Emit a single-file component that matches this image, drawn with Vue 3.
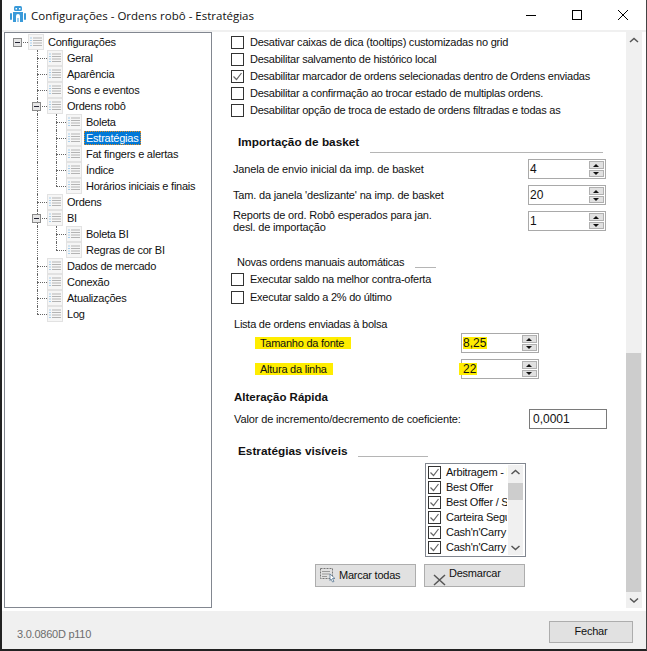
<script setup>
const tree = [
  { label: 'Configurações', d: 0, exp: true, g: [] },
  { label: 'Geral', d: 1, g: ['a'] },
  { label: 'Aparência', d: 1, g: ['a'] },
  { label: 'Sons e eventos', d: 1, g: ['a'] },
  { label: 'Ordens robô', d: 1, exp: true, g: ['a'] },
  { label: 'Boleta', d: 2, g: ['a', 'b'] },
  { label: 'Estratégias', d: 2, sel: true, g: ['a', 'b'] },
  { label: 'Fat fingers e alertas', d: 2, g: ['a', 'b'] },
  { label: 'Índice', d: 2, g: ['a', 'b'] },
  { label: 'Horários iniciais e finais', d: 2, g: ['a', 'b-end'] },
  { label: 'Ordens', d: 1, g: ['a'] },
  { label: 'BI', d: 1, exp: true, g: ['a'] },
  { label: 'Boleta BI', d: 2, g: ['a', 'b'] },
  { label: 'Regras de cor BI', d: 2, g: ['a', 'b-end'] },
  { label: 'Dados de mercado', d: 1, g: ['a'] },
  { label: 'Conexão', d: 1, g: ['a'] },
  { label: 'Atualizações', d: 1, g: ['a'] },
  { label: 'Log', d: 1, g: ['a-end'] }
]
const topChecks = [
  { label: 'Desativar caixas de dica (tooltips) customizadas no grid' },
  { label: 'Desabilitar salvamento de histórico local' },
  { label: 'Desabilitar marcador de ordens selecionadas dentro de Ordens enviadas', on: true },
  { label: 'Desabilitar a confirmação ao trocar estado de multiplas ordens.' },
  { label: 'Desabilitar opção de troca de estado de ordens filtradas e todas as' }
]
const strategies = ['Arbitragem - Par', 'Best Offer', 'Best Offer / Stop', 'Carteira Segura', "Cash'n'Carry", "Cash'n'Carry 2"]
</script>

<template>
  <div class="win">
    <header class="title">
      <svg class="logo" width="16" height="18" viewBox="0 0 16 18">
        <rect x="4" y="0" width="8" height="5" rx="1.500" fill="#3a9ad9" />
        <rect x="5.500" y="2" width="1.500" height="1.500" fill="#fff" />
        <rect x="9" y="2" width="1.500" height="1.500" fill="#fff" />
        <path d="M3 6h10v10h-3v-6a2 2 0 0 0-4 0v6H3z" fill="#3a9ad9" />
        <rect x="0" y="7" width="2" height="7" rx="1" fill="#3a9ad9" />
        <rect x="14" y="7" width="2" height="7" rx="1" fill="#3a9ad9" />
        <rect x="7" y="12" width="2" height="4" fill="#9ccdee" />
      </svg>
      <span class="title-text">Configurações - Ordens robô - Estratégias</span>
      <div class="controls">
        <div class="ctl"><svg width="10" height="10" viewBox="0 0 10 10"><path d="M0 5.500h10" stroke="#000" /></svg></div>
        <div class="ctl"><svg width="10" height="10" viewBox="0 0 10 10"><rect x=".5" y=".5" width="9" height="9" fill="none" stroke="#000" /></svg></div>
        <div class="ctl"><svg width="10" height="10" viewBox="0 0 10 10"><path d="M0 0l10 10M10 0L0 10" stroke="#000" /></svg></div>
      </div>
    </header>

    <div class="strip"></div>

    <main class="body">
      <nav class="tree">
        <div v-for="n in tree" :key="n.label" class="node" :class="'d' + n.d">
          <i v-for="g in n.g" :key="g" class="guide" :class="'g-' + g"></i>
          <span class="branch"></span>
          <span v-if="n.exp" class="twist"><i></i></span>
          <svg class="ticon" width="16" height="16" viewBox="0 0 16 16">
            <rect x=".5" y=".5" width="15" height="15" fill="#f6f6f6" stroke="#e2e2e2" />
            <path d="M5 4h9M5 6.500h9M5 9h9M5 11.500h9" stroke="#b4b4b4" />
            <path d="M2.500 4h1M2.500 6.500h1M2.500 9h1M2.500 11.500h1" stroke="#58a6e0" />
          </svg>
          <span class="tlabel" :class="{ sel: n.sel }">{{ n.label }}</span>
        </div>
      </nav>

      <section class="panel">
        <div class="content">
          <label v-for="c in topChecks" :key="c.label" class="chk">
            <span class="box"><svg v-if="c.on" width="11" height="11" viewBox="0 0 11 11"><path d="M1.500 5.500l3 3 5-6.500" fill="none" stroke="#666" stroke-width="1.200" /></svg></span>
            {{ c.label }}
          </label>

          <div class="hrow basket">
            <b class="hlabel w-basket">Importação de basket</b>
            <span class="rule r-basket"></span>
          </div>

          <div class="frow f1">
            <span>Janela de envio inicial da imp. de basket</span>
            <div class="spin"><span class="val">4</span><div class="arrows"><i class="up"></i><i class="down"></i></div></div>
          </div>
          <div class="frow f2">
            <span>Tam. da janela 'deslizante' na imp. de basket</span>
            <div class="spin"><span class="val">20</span><div class="arrows"><i class="up"></i><i class="down"></i></div></div>
          </div>
          <div class="frow f2">
            <span class="two">Reports de ord. Robô esperados para jan.<br />desl. de importação</span>
            <div class="spin"><span class="val">1</span><div class="arrows"><i class="up"></i><i class="down"></i></div></div>
          </div>

          <div class="hrow novas">
            <span class="hlabel w-novas">Novas ordens manuais automáticas</span>
            <span class="rule r-novas"></span>
          </div>
          <label class="chk c-a"><span class="box"></span>Executar saldo na melhor contra-oferta</label>
          <label class="chk c-b"><span class="box"></span>Executar saldo a 2% do último</label>

          <div class="lista">Lista de ordens enviadas à bolsa</div>
          <div class="grow g-font">
            <span class="mark m-font">Tamanho da fonte</span>
            <div class="spin"><span class="val"><span class="vmark">8,25</span></span><div class="arrows"><i class="up"></i><i class="down"></i></div></div>
          </div>
          <div class="grow g-line">
            <span class="mark m-line">Altura da linha</span>
            <div class="spin"><span class="val"><span class="vmark over">22</span></span><div class="arrows"><i class="up"></i><i class="down"></i></div></div>
          </div>

          <b class="alt">Alteração Rápida</b>
          <div class="frow valor">
            <span>Valor de incremento/decremento de coeficiente:</span>
            <div class="input">0,0001</div>
          </div>

          <div class="hrow visiveis">
            <b class="hlabel w-vis">Estratégias visíveis</b>
            <span class="rule r-vis"></span>
          </div>

          <div class="list">
            <div class="items">
              <div v-for="s in strategies" :key="s" class="item">
                <span class="box"><svg width="11" height="11" viewBox="0 0 11 11"><path d="M1.500 5.500l3 3 5-6.500" fill="none" stroke="#666" stroke-width="1.200" /></svg></span>
                <span class="itext">{{ s }}</span>
              </div>
            </div>
            <div class="lscroll">
              <svg width="15" height="15" viewBox="0 0 15 15"><path d="M3.500 9L7.500 5.500l4 3.500" fill="none" stroke="#555" stroke-width="1.500" /></svg>
              <div class="lthumb"></div>
              <svg class="down-btn" width="15" height="15" viewBox="0 0 15 15"><path d="M3.500 6l4 3.500 4-3.500" fill="none" stroke="#555" stroke-width="1.500" /></svg>
            </div>
          </div>

          <div class="btns">
            <button class="btn">
              <svg width="17" height="15" viewBox="0 0 17 15">
                <rect x=".5" y=".5" width="12" height="10" fill="none" stroke="#777" stroke-dasharray="2 1" />
                <path d="M2 3.500h8M2 6h8M2 8.500h5" stroke="#999" />
                <path d="M10 6l5 4.500h-2.500l1.500 3-1.500.5-1.500-3L10 12.500z" fill="#fff" stroke="#5a7a96" stroke-width=".8" />
              </svg>
              <span>Marcar todas</span>
            </button>
            <button class="btn btn-x">
              <svg width="14" height="12" viewBox="0 0 14 12"><path d="M1 1l11 10M12 1L1 11" stroke="#555" stroke-width="1.500" /></svg>
              <span>Desmarcar</span>
            </button>
          </div>
        </div>

        <div class="vscroll">
          <svg width="16" height="16" viewBox="0 0 16 16"><path d="M4 10l4-3.500 4 3.500" fill="none" stroke="#555" stroke-width="1.500" /></svg>
          <div class="vtrack"><div class="vthumb"></div></div>
          <svg width="16" height="16" viewBox="0 0 16 16"><path d="M4 6.500l4 3.500 4-3.500" fill="none" stroke="#555" stroke-width="1.500" /></svg>
        </div>
      </section>
    </main>

    <footer class="foot">
      <span class="ver">3.0.0860D p110</span>
      <button class="close">Fechar</button>
    </footer>
  </div>
</template>

<style>
html, body { margin: 0; padding: 0; background: #fff; }
</style>

<style scoped>
.win {
  box-sizing: border-box;
  width: 647px;
  height: 651px;
  border-left: 2px solid #222;
  border-bottom: 2px solid #222;
  border-right: 1px solid #444;
  background: #fff;
  display: flex;
  flex-direction: column;
  overflow: hidden;
  font: 11px/1 "Liberation Sans", Arial, sans-serif;
  letter-spacing: -0.24px;
  color: #111;
}
.title { height: 30px; display: flex; align-items: center; flex: none; }
.logo { margin-left: 8px; }
.title-text { margin-left: 5px; font: 11.5px "Open Sans", sans-serif; letter-spacing: 0; color: #111; }
.controls { margin-left: auto; display: flex; }
.ctl { width: 46px; height: 30px; display: flex; align-items: center; justify-content: center; }
.strip { height: 2px; background: #f0f0f0; flex: none; }

.body { display: flex; flex: none; height: 579px; }
.tree {
  box-sizing: border-box;
  width: 208px;
  height: 576px;
  margin-left: 2px;
  border: 1px solid #828790;
  padding-top: 1px;
  flex: none;
}
.node { position: relative; height: 16px; display: flex; align-items: center; }
.d0 { padding-left: 23px; }
.d1 { padding-left: 42px; }
.d2 { padding-left: 61px; }
.ticon { flex: none; }
.tlabel { margin-left: 3px; padding: 0 1px; line-height: 14px; height: 14px; white-space: nowrap; }
.sel { background: #0078d7; color: #fff; outline: 1px dotted #e08a20; outline-offset: -1px; padding: 0 3px 0 2px; margin-left: 2px; }
.branch { position: absolute; top: 8px; width: 10px; border-top: 1px dotted #666; }
.d0 .branch { left: 16px; width: 7px; }
.d1 .branch { left: 32px; }
.d2 .branch { left: 51px; }
.guide { position: absolute; top: 0; height: 16px; border-left: 1px dotted #666; }
.g-a, .g-a-end { left: 32px; }
.g-b, .g-b-end { left: 51px; }
.g-a-end, .g-b-end { height: 8px; }
.twist {
  position: absolute;
  top: 4px;
  width: 9px;
  height: 9px;
  box-sizing: border-box;
  border: 1px solid #8a8a8a;
  background: #e6e6e6;
  display: flex;
  align-items: center;
  justify-content: center;
}
.twist i { width: 5px; height: 1px; background: #223; }
.d0 .twist { left: 8px; }
.d1 .twist { left: 27px; }

.panel { flex: none; margin-left: 3px; width: 427px; display: flex; height: 579px; }
.content { width: 411px; flex: none; padding-top: 2px; box-sizing: border-box; }
.chk { display: flex; align-items: center; height: 17px; padding-left: 16px; white-space: nowrap; }
.box {
  box-sizing: border-box;
  width: 13px;
  height: 13px;
  border: 1px solid #333;
  background: #fff;
  margin-right: 6px;
  flex: none;
  display: flex;
  align-items: center;
  justify-content: center;
}
.hrow { display: flex; white-space: nowrap; }
.hlabel { display: block; flex: none; }
b.hlabel { font-size: 11.800px; letter-spacing: 0; }
.rule { height: 1px; background: #b5b5b5; flex: none; align-self: flex-end; }
.basket { height: 20px; margin-top: 14px; padding-left: 23px; line-height: 18px; }
.w-basket { width: 132px; }
.r-basket { width: 233px; }
.frow { display: flex; justify-content: space-between; align-items: center; margin-left: 18px; width: 373px; white-space: nowrap; letter-spacing: -0.17px; }
.f1 { height: 20px; margin-top: 6px; }
.f2 { height: 20px; margin-top: 6px; }
.two { line-height: 12.500px; }
.spin {
  box-sizing: border-box;
  width: 78px;
  height: 20px;
  border: 1px solid #a9a9a9;
  background: #fff;
  display: flex;
  align-items: center;
  justify-content: space-between;
  flex: none;
  color: #111;
}
.val { padding-left: 1px; font-size: 12px; letter-spacing: 0; }
.arrows { width: 15px; height: 16px; display: flex; flex-direction: column; gap: 1px; margin-right: 1px; }
.arrows i { flex: 1; background: #e1e1e1; border: 1px solid #b0b0b0; position: relative; box-sizing: border-box; }
.arrows i::after {
  content: "";
  position: absolute;
  left: 3px;
  top: 1.500px;
  border-left: 3.500px solid transparent;
  border-right: 3.500px solid transparent;
}
.up::after { border-bottom: 3.500px solid #111; }
.down::after { border-top: 3.500px solid #111; }
.novas { height: 14px; margin-top: 24px; padding-left: 22px; line-height: 15px; }
.w-novas { width: 178px; }
.r-novas { width: 21px; margin-bottom: 1px; }
.c-a { margin-top: 2px; }
.c-b { height: 18px; }
.lista { margin: 10px 0 0 19px; height: 16px; line-height: 16px; }
.grow { display: flex; justify-content: space-between; align-items: center; width: 284px; margin-left: 40px; height: 20px; white-space: nowrap; }
.g-font { margin-top: 1px; }
.g-line { margin-top: 6px; }
.mark { display: block; background: #ffed00; height: 12px; line-height: 12px; padding-left: 5px; box-sizing: border-box; }
.m-font { width: 96px; }
.m-line { width: 78px; }
.vmark { background: #ffed00; display: inline-block; height: 12px; line-height: 12px; padding-right: 1px; }
.over { box-shadow: -4px 0 0 #ffed00; }
.alt { display: block; margin: 10px 0 0 19px; height: 16px; line-height: 16px; font-size: 11.500px; letter-spacing: 0; }
.valor { height: 20px; margin-top: 4px; margin-left: 19px; width: 373px; letter-spacing: -0.13px; }
.input {
  box-sizing: border-box;
  width: 78px;
  height: 20px;
  line-height: 18px;
  border: 1px solid #7a7a7a;
  padding-left: 3px;
  font-size: 12px;
  letter-spacing: 0;
}
.visiveis { height: 14px; margin-top: 14px; padding-left: 23px; line-height: 16px; }
.w-vis { width: 120px; }
.r-vis { width: 70px; }
.list {
  box-sizing: border-box;
  width: 101px;
  height: 94px;
  margin: 6px 0 0 210px;
  border: 1px solid #828790;
  display: flex;
  overflow: hidden;
}
.items { box-sizing: border-box; width: 81px; padding: 1px 0 0 2px; overflow: hidden; flex: none; }
.item { display: flex; align-items: center; height: 15px; white-space: nowrap; }
.item .box { margin-right: 5px; }
.itext { white-space: nowrap; }
.lscroll { width: 15px; margin-left: 1px; background: #f0f0f0; display: flex; flex-direction: column; flex: none; height: 90px; margin-top: 1px; }
.lthumb { height: 17px; background: #cdcdcd; margin-top: 3px; }
.down-btn { margin-top: auto; }
.btns { display: flex; gap: 8px; margin: 7px 0 0 100px; }
.btn {
  box-sizing: border-box;
  width: 101px;
  height: 23px;
  border: 1px solid #adadad;
  background: #e1e1e1;
  font: inherit;
  letter-spacing: inherit;
  color: #111;
  display: flex;
  align-items: center;
  padding: 0 0 0 4px;
  gap: 2px;
}
.btn-x { padding-left: 8px; gap: 2px; align-items: flex-end; }
.btn-x span { align-self: flex-start; margin-top: 3px; }

.vscroll { width: 16px; height: 576px; background: #f0f0f0; display: flex; flex-direction: column; flex: none; }
.vtrack { flex: 1; position: relative; }
.vthumb { position: absolute; left: 0; right: 1px; bottom: 0; height: 239px; background: #cdcdcd; }

.foot { height: 38px; background: #f0f0f0; display: flex; align-items: center; justify-content: space-between; flex: none; }
.ver { margin-left: 15px; color: #6d6d6d; margin-top: 8px; }
.close {
  box-sizing: border-box;
  width: 84px;
  height: 22px;
  margin: 3px 13px 0 0;
  border: 1px solid #adadad;
  background: #e1e1e1;
  font: inherit;
  letter-spacing: inherit;
  color: #111;
  padding: 0;
}
</style>
